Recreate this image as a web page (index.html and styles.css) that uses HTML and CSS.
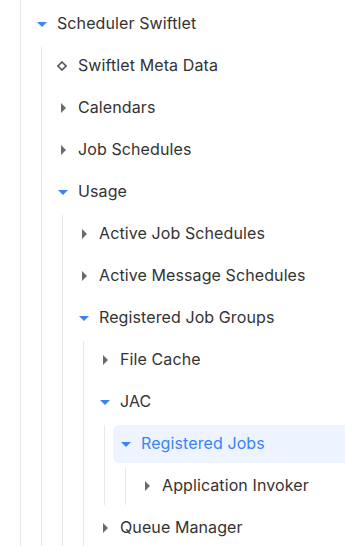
FILE: index.html
```html
<!DOCTYPE html>
<html lang="en">
<head>
  <meta charset="UTF-8">
  <meta name="viewport" content="width=device-width, initial-scale=1.0">
  <title>Scheduler Swiftlet</title>
  <link rel="stylesheet" href="styles.css">
</head>
<body>
  <div class="tree">
    <ul class="nodes">
      <li class="node">
        <div class="row">
          <span class="icon"><svg class="caret-down" width="10" height="5" viewBox="0 0 10 5"><path d="M0 0H10L5 5Z"/></svg></span>
          <span class="label">Scheduler Swiftlet</span>
        </div>
        <ul class="nodes children">
          <li class="node">
            <div class="row">
              <span class="icon"><svg class="diamond" width="10" height="10" viewBox="0 0 10 10"><path d="M5 1L9 5L5 9L1 5Z"/></svg></span>
              <span class="label">Swiftlet Meta Data</span>
            </div>
          </li>
          <li class="node">
            <div class="row">
              <span class="icon"><svg class="caret-right" width="5" height="10" viewBox="0 0 5 10"><path d="M0 0L5 5L0 10Z"/></svg></span>
              <span class="label">Calendars</span>
            </div>
          </li>
          <li class="node">
            <div class="row">
              <span class="icon"><svg class="caret-right" width="5" height="10" viewBox="0 0 5 10"><path d="M0 0L5 5L0 10Z"/></svg></span>
              <span class="label">Job Schedules</span>
            </div>
          </li>
          <li class="node">
            <div class="row">
              <span class="icon"><svg class="caret-down" width="10" height="5" viewBox="0 0 10 5"><path d="M0 0H10L5 5Z"/></svg></span>
              <span class="label">Usage</span>
            </div>
            <ul class="nodes children">
              <li class="node">
                <div class="row">
                  <span class="icon"><svg class="caret-right" width="5" height="10" viewBox="0 0 5 10"><path d="M0 0L5 5L0 10Z"/></svg></span>
                  <span class="label">Active Job Schedules</span>
                </div>
              </li>
              <li class="node">
                <div class="row">
                  <span class="icon"><svg class="caret-right" width="5" height="10" viewBox="0 0 5 10"><path d="M0 0L5 5L0 10Z"/></svg></span>
                  <span class="label">Active Message Schedules</span>
                </div>
              </li>
              <li class="node">
                <div class="row">
                  <span class="icon"><svg class="caret-down" width="10" height="5" viewBox="0 0 10 5"><path d="M0 0H10L5 5Z"/></svg></span>
                  <span class="label">Registered Job Groups</span>
                </div>
                <ul class="nodes children">
                  <li class="node">
                    <div class="row">
                      <span class="icon"><svg class="caret-right" width="5" height="10" viewBox="0 0 5 10"><path d="M0 0L5 5L0 10Z"/></svg></span>
                      <span class="label">File Cache</span>
                    </div>
                  </li>
                  <li class="node">
                    <div class="row">
                      <span class="icon"><svg class="caret-down" width="10" height="5" viewBox="0 0 10 5"><path d="M0 0H10L5 5Z"/></svg></span>
                      <span class="label">JAC</span>
                    </div>
                    <ul class="nodes children">
                      <li class="node">
                        <div class="row selected">
                          <span class="icon"><svg class="caret-down" width="10" height="5" viewBox="0 0 10 5"><path d="M0 0H10L5 5Z"/></svg></span>
                          <span class="label">Registered Jobs</span>
                        </div>
                        <ul class="nodes children">
                          <li class="node">
                            <div class="row">
                              <span class="icon"><svg class="caret-right" width="5" height="10" viewBox="0 0 5 10"><path d="M0 0L5 5L0 10Z"/></svg></span>
                              <span class="label">Application Invoker</span>
                            </div>
                          </li>
                        </ul>
                      </li>
                    </ul>
                  </li>
                  <li class="node">
                    <div class="row">
                      <span class="icon"><svg class="caret-right" width="5" height="10" viewBox="0 0 5 10"><path d="M0 0L5 5L0 10Z"/></svg></span>
                      <span class="label">Queue Manager</span>
                    </div>
                  </li>
                </ul>
              </li>
            </ul>
          </li>
        </ul>
      </li>
    </ul>
  </div>
</body>
</html>
```

FILE: styles.css
```css
body, html {
  margin: 0;
  padding: 0;
  overflow: hidden;
  background: #fff;
}
body {
  font-family: Inter, "Noto Sans", sans-serif;
}
.tree {
  min-height: 546px;
  margin-left: 20px;
  padding-top: 5px;
  border-left: 1px solid #e8e8e8;
  box-sizing: border-box;
}
.nodes {
  display: flex;
  flex-direction: column;
  gap: 4px;
  margin: 0;
  padding: 0;
  list-style: none;
}
.node {
  display: flex;
  flex-direction: column;
  gap: 4px;
}
.children {
  margin-left: 20px;
  border-left: 1px solid #e8e8e8;
}
.row {
  display: flex;
  align-items: center;
  height: 38px;
  margin-left: 8px;
  padding-left: 4px;
  border-radius: 6px 0 0 6px;
  cursor: pointer;
}
.row .icon {
  display: flex;
  align-items: center;
  justify-content: center;
  width: 18px;
  height: 18px;
}
.row .label {
  margin-left: 6px;
  margin-bottom: 2px;
  font-size: 16px;
  letter-spacing: 0.1px;
  color: #333;
  white-space: nowrap;
}
.caret-down {
  fill: #3b82f6;
}
.caret-right {
  fill: #6b6b6b;
}
.diamond {
  fill: none;
  stroke: #555;
  stroke-width: 1.6;
  margin-right: 3px;
}
.row.selected {
  background: #edf4ff;
}
.row.selected .label {
  color: #3b82f6;
}
```
